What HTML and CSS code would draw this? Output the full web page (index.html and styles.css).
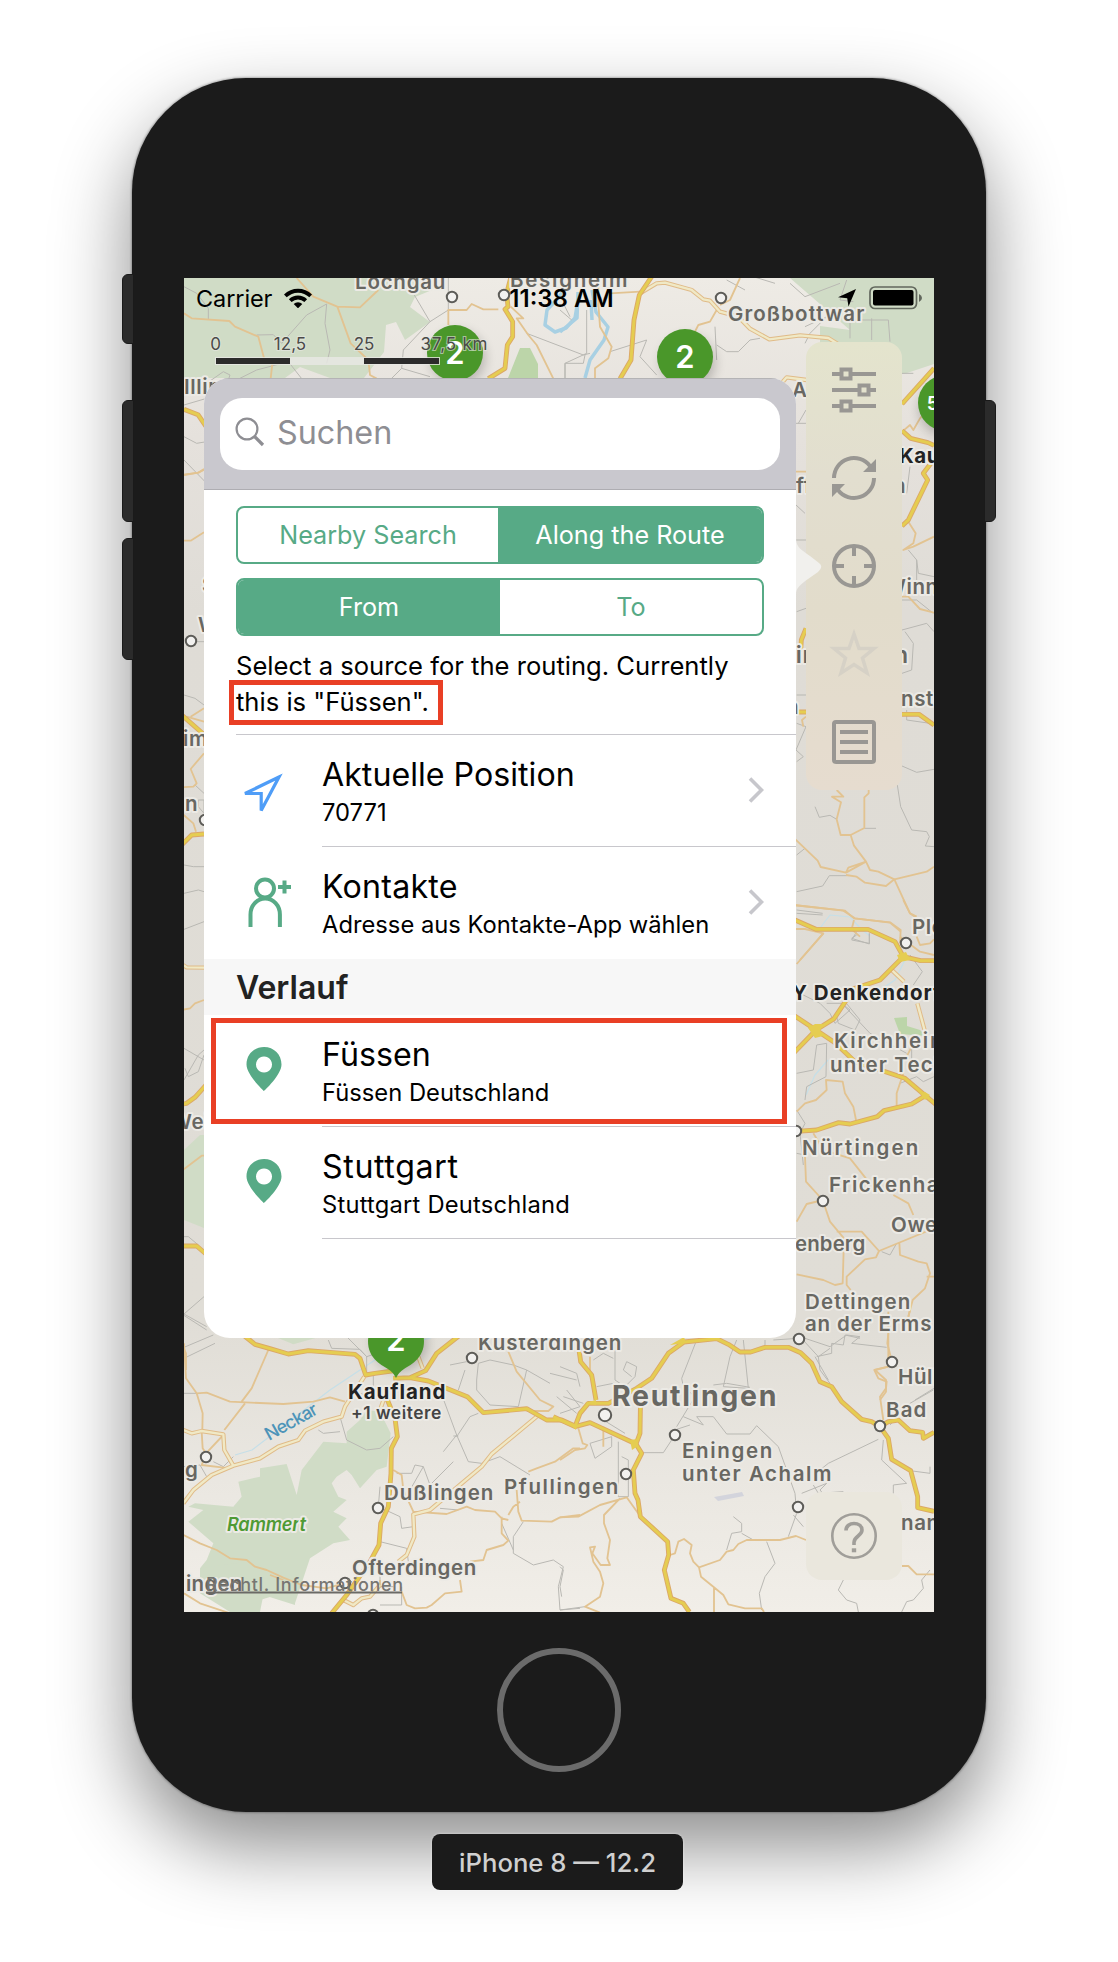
FILE: index.html
```html
<!DOCTYPE html>
<html lang="de">
<head>
<meta charset="utf-8">
<title>iPhone 8 — 12.2</title>
<link rel="stylesheet" href="styles.css">
</head>
<body>
<main class="stage">
  <div class="phone">
    <i class="key key-mute"></i><i class="key key-up"></i><i class="key key-down"></i><i class="key key-power"></i>
    <div class="screen">
      <svg class="map" viewBox="184 278 750 1334" width="750" height="1334">
        <defs>
          <linearGradient id="land" x1="0" y1="0" x2="0" y2="1">
            <stop offset="0" stop-color="#eeebe5"/><stop offset=".12" stop-color="#e5e1dc"/><stop offset=".25" stop-color="#dfdcd6"/>
            <stop offset=".78" stop-color="#e0ddd6"/><stop offset=".9" stop-color="#eae7e1"/><stop offset="1" stop-color="#f1eee8"/>
          </linearGradient>
          <filter id="soft" x="-50%" y="-50%" width="200%" height="200%"><feGaussianBlur stdDeviation="6"/></filter>
          <g id="motorways">
            <g transform="translate(100 60) scale(.33333)">
              <path d="M1232 654L1220 700 1224 740 1215 748 1238 785V830L1222 855 1215 925 1165 956"/>
              <path d="M252 1048L294 1064 320 1102"/>
            </g>
            <g transform="translate(560 260) scale(.33333)">
              <path d="M275 50L238 105 222 180 213 300 180 356"/>
              <path d="M1122 325L1026 432M1026 512L1052 535 1104 548 1122 556M1122 598L1090 640 1103 660 1045 780 1026 798"/>
            </g>
            <g transform="translate(780 560) scale(.33333)">
              <path d="M78 205L64 240 62 275M40 456H78M366 463H417L462 495"/>
            </g>
            <g transform="translate(780 900) scale(.33333)">
              <path d="M40 58L108 88H264L345 125 370 170 422 182H462"/>
              <path d="M370 170L300 240 215 268 196 305 162 356 108 390 40 460M40 345L108 390 165 428 225 485 375 535 436 587 470 615"/>
              <path d="M436 587L395 612 312 632 292 650 210 672 176 668 110 690 50 694"/>
            </g>
            <g transform="translate(170 370) scale(.33333)">
              <path d="M35 1035L100 1092M35 1425L65 1395 102 1392"/>
            </g>
            <g transform="translate(170 870) scale(.33333)">
              <path d="M35 703L50 700 75 682 108 645M35 1128H80L108 1152"/>
            </g>
            <g transform="translate(180 1310) scale(.33333)">
              <path d="M190 75L225 103 270 116 325 132 385 122 525 133 540 145 557 195 585 190 645 182"/>
              <path d="M840 75L770 130 737 182 690 203 640 205M690 203L745 213 862 260 910 308 1040 296 1100 330 1145 330 1190 350"/>
              <path d="M610 240L645 325 652 380 634 415 633 490 625 590 602 640 597 705 570 755 500 855 455 910"/>
            </g>
            <g transform="translate(560 1310) scale(.33333)">
              <path d="M-20 320L45 350 90 338 228 402 240 370 242 240"/>
              <path d="M45 350L60 310 85 280 145 280 230 235 275 205 325 130 372 96 470 86 505 103 540 126H572L615 112H685L722 128 755 160 780 215 815 230 845 275 905 328 935 335 960 350 985 385 995 448 1052 482 1073 560V593L1122 604"/>
              <path d="M960 350L985 335 1015 330 1050 362 1088 367 1090 385 1122 367M52 85L62 155 95 195 108 270"/>
              <path d="M228 402L245 430 220 480 225 550 234 570 241 620 323 695 326 735 313 780 333 865 370 880 388 906"/>
            </g>
          </g>
          <g id="highways">
            <g transform="translate(560 260) scale(.33333)">
              <path d="M240 100L290 70 315 68 395 90 430 118 450 122 480 155 535 170 570 206 628 238 720 226 805 234 850 262M660 375L680 352 740 360"/>
            </g>
            <g transform="translate(780 900) scale(.33333)"><path d="M330 205L372 245M412 310L435 395"/></g>
            <g transform="translate(170 870) scale(.33333)"><path d="M35 283L50 292 105 293"/></g>
            <g transform="translate(180 1310) scale(.33333)">
              <path d="M553 200L495 290 485 320 430 335 375 362 355 390 295 410 240 445 160 467 95 495 40 540 10 580M10 360L35 370 65 363 130 373 133 420 160 467M715 140L728 175M600 300L625 230"/>
              <path d="M1070 320L935 432 905 470 750 600 700 613 703 680 680 735 655 755M490 870L520 885 545 865 570 860 600 825"/>
            </g>
          </g>
        </defs>
        <rect x="184" y="278" width="750" height="1334" fill="url(#land)"/>

        <g class="wood">
          <path d="M184 278H425L432 290 415 297 410 307 430 322 405 340 396 322 386 325 384 352 364 378H330L300 367 285 378H184Z"/>
          <path d="M790 278H934V364L904 374H820V326L850 330Z"/>
          <path d="M184 1150L200 1135H204V1228L184 1220Z"/>
          <g transform="translate(180 1310) scale(.33333)">
            <path d="M285 80H420L340 103ZM540 330L560 300 600 305 632 370 620 470 590 480 540 535 515 495 500 480 470 500 455 520 475 560 500 570 460 605 500 625 475 650 510 690 460 700 390 745 345 880 290 855 240 870 190 880 60 775 80 750 100 700 25 635 70 600 25 590 45 580 160 590 185 560 175 515 240 500 240 475 320 462 350 555 365 480 430 395 500 400 500 365Z"/>
            <path d="M60 775L200 755 345 800 345 885 250 855 240 906H150L60 850Z"/>
          </g>
        </g>
        <g class="park">
          <path d="M508 378L520 348H530L538 364V378Z"/>
          <path d="M894 1018L907 1017V1026L920 1030 926 1036 900 1034Z"/>
        </g>
        <path d="M714 1497L742 1492 744 1496 718 1501Z" fill="#d3d4dc"/>

        <g class="water">
          <path d="M570 282L558 298 547 310 545 325 555 332 566 328 575 318 578 300M592 290L596 312 608 327 604 340 590 360 585 378"/>
          <path d="M560 332L577 318 578 292M591 300L592 320" />
        </g>
        <g class="stream">
          <path d="M820 928L830 915 850 917 862 930 870 936M235 1455L252 1450 330 1390 390 1350 440 1335M905 960L895 980 880 990M828 1060L815 1075 806 1095"/>
        </g>

        <g class="lane">
          <g transform="translate(100 60) scale(.33333)">
            <path d="M252 680L290 700 325 745V778M470 825L520 824 545 850 620 765 680 732 675 790 690 870 680 910M320 970L370 935 390 945 380 975 470 930 565 905 620 975M940 700L990 785 910 870 905 925 870 960M990 785L1045 750V650M905 925L990 950M1280 820L1450 885 1470 880M1460 750V880L1395 910V956M252 1035L320 1015M252 1130L290 1150 320 1145M252 1200L320 1270M1410 770L1390 730"/>
          </g>
          <g transform="translate(560 260) scale(.33333)">
            <path d="M15 356V310H70L75 285M35 180L0 150M150 275L260 240 240 290 290 345M465 200L470 300M470 255L500 275H535L570 240 600 235M500 60L555 90M580 50L645 70M690 70L735 110 840 70M860 60L840 120 880 125M735 200L800 170 750 220 735 250M870 180V235M935 175V240M870 180H985L990 245M1026 340H1060M708 490H738M708 735L735 760M708 840H738M1050 620L1040 700M1045 870L1070 900V960M715 490L738 450"/>
          </g>
          <g transform="translate(780 560) scale(.33333)">
            <path d="M50 155L78 145M366 210L440 190 462 215M375 215L400 250 395 330 366 340M410 0L415 40 462 50M366 120H410L460 160M50 490L78 500 48 570 70 590 50 605M50 405H78M366 618L410 637 462 628M352 675L362 740 395 810 440 815 448 830 436 858 462 860M105 740L118 772 150 766 170 778M253 805H288M50 885L75 865M50 995L128 978 148 947H200M50 1050L128 1060M230 1125L215 1135 268 1152V1120M380 450V480L450 490"/>
          </g>
          <g transform="translate(780 900) scale(.33333)">
            <path d="M50 40L128 45M230 95L215 120 268 130V100M390 165L427 215 400 255M60 280L120 310 150 340 165 370 210 330 185 310 140 310M195 305L240 360 225 390 175 370 170 350M195 320L270 400 380 460M50 520L100 510 110 435 140 430 138 530 80 560 75 600M395 440V500M360 550L410 530 430 545 462 530M50 630L75 670 60 700 70 795M50 760L75 765M305 1055L330 1065 350 1030M60 1310L150 1340 200 1305 240 1310 215 1330 320 1342M115 1370L150 1345M60 1310L115 1370 120 1410 150 1450M405 1500L462 1465"/>
          </g>
          <g transform="translate(170 370) scale(.33333)"><path d="M80 815H102M42 975L75 985 102 1005M75 1245L102 1270M85 1290H102V1330L85 1310ZM42 1485L70 1490H102"/></g>
          <g transform="translate(170 870) scale(.33333)"><path d="M42 70L85 60 102 65M42 178L102 155M42 535L102 570M42 630L85 555 102 540M45 595L55 620 85 605 102 555M42 1100H55L85 1125M42 1332L102 1280M42 1332L110 1370M42 1432L130 1395"/></g>
          <g transform="translate(180 1310) scale(.33333)">
            <path d="M10 15L80 60M12 145L105 100M12 250H50M445 90L455 115 540 118 560 140V190M500 80L560 140 590 130M580 190V240M480 320L500 390 560 420 600 415 640 380M540 250L575 260M780 240L830 375 865 455 905 460M790 425L830 375M820 378H835M830 380L870 320 895 310M810 165L860 155 870 150M835 240L855 180M890 210L895 160 930 150 1000 165 1040 180 1015 290 930 285 890 240ZM1040 180L1110 220M1110 190L1190 210M1130 260L1190 310M415 360L430 370 480 365M650 490L695 490 705 465 730 470 750 525 820 455M730 470L690 540M600 530L595 590 660 620 665 655 700 650M600 695L680 715 685 755M600 760V830H640M600 885H665V830M905 460L960 440 1050 495M780 595L835 600M1030 635L1000 680V730L1060 765 1120 750 1150 770 1135 830 1140 900 1200 895M965 640L1000 720M10 470L60 465 80 500M100 455L130 470 160 440"/>
          </g>
          <g transform="translate(560 1310) scale(.33333)">
            <path d="M165 85V210L195 230 225 200 230 170 200 155 190 180 215 200M100 150L130 130 160 145M0 170L50 190 60 230M10 260L70 280M20 240L60 290 0 310M410 90L365 205 370 230 405 260 350 350M530 90L510 140 490 230 565 235 550 90M460 225L500 220 570 232M370 320L430 345 410 320H460L500 372H570L590 347 655 410 705 550 710 610 685 680M725 550L800 520 780 540 830 600M350 358L390 345M345 375L310 428H245M90 400L105 445 155 410V380L90 400M130 330L195 370M175 395V560H205V450L185 440M805 460L955 388M780 480L805 460M970 390L965 450 1040 520 1000 525V550M1050 482L1110 490V470M700 615L730 650M760 525L775 550 850 545M615 90V110M640 90L715 85M765 140L805 210M770 140L815 130V100L850 105 855 75 900 85M990 345L1050 280 1120 240M520 620L545 640V665L515 670 500 720M545 670L580 690M620 695L645 760 615 800 598 850 605 900M850 810L835 840 860 870 890 880 895 906M1110 780L1085 810 1090 835 1060 870 1040 875 1025 906M0 770L10 780 0 830 5 860M0 900L75 890M160 220L110 230"/>
          </g>
        </g>

        <g class="road">
          <g transform="translate(100 60) scale(.33333)">
            <path d="M590 654L640 710 712 740 780 742 835 690M712 740L752 850 805 900 810 945 830 956M252 760L275 775 388 783 405 800 475 830 495 905 517 910 512 956M1045 795V750H1100L1115 732 1150 748H1195M1232 740L1270 775 1250 775 1285 825 1310 855 1360 956M1495 654V740M252 1245L295 1238 320 1225"/>
          </g>
          <g transform="translate(560 260) scale(.33333)">
            <path d="M540 54L510 120 480 135M470 150L450 185 415 195 405 215M115 130L120 200 155 260 145 295 105 325V356M150 100L240 95M708 635H738M1122 430L1080 475 1060 510 1050 495 1030 512M1045 785L1067 820 1060 850 1030 870 1060 860 1122 830"/>
          </g>
          <g transform="translate(780 560) scale(.33333)">
            <path d="M366 110H385L420 147 462 158M40 832L113 902 122 921 198 938 258 905 222 857 212 825 253 804V712L266 700V690M212 825L182 825 170 778 183 727 156 710 190 710 170 690M198 938L205 923 258 905 270 930 295 935 343 958 440 935 462 920M198 945L230 950 255 968 318 978 343 958 390 1060 405 1070M40 1035L195 1052 222 1075 330 1087 362 1110 360 1150M40 1107H75L130 1120 60 1200M78 470L66 480 70 500"/>
          </g>
          <g transform="translate(780 900) scale(.33333)">
            <path d="M370 0L390 40 410 50M40 15L190 32 225 55 330 68 362 95M50 192L130 100M222 60L215 88 240 110M360 110L420 155 462 165M410 110L420 135 450 130 462 118M50 635L75 610 108 600 140 570 138 540 188 545 195 580 220 620 228 660M370 520L350 580V620M395 440L380 470M100 700L130 750 210 775 260 838M75 770L78 845 128 900 150 965 192 1015 188 1150 165 1155 130 1140 50 1123M50 965L80 912 130 900M170 995H245L297 1053 462 985M297 1053L288 1072 255 1078 200 1130V1155L212 1170M340 885L385 910 400 945M358 1028L360 1065 415 1085 440 1090 450 1120 435 1165 398 1200 385 1250M440 1130H462M325 1235V1400M325 1400L285 1410 318 1440V1475L300 1500"/>
          </g>
          <g transform="translate(170 370) scale(.33333)"><path d="M35 315L85 308 102 297M35 512H62L102 487M62 1040L102 1015M50 1040L102 1055M102 1150L62 1197 80 1240 70 1250 35 1252M35 1330L70 1360 78 1385"/></g>
          <g transform="translate(170 870) scale(.33333)"><path d="M35 420L60 415 75 400 102 390M35 903L95 857H102M35 1420L48 1450V1500"/></g>
          <g transform="translate(180 1310) scale(.33333)">
            <path d="M12 100L18 205 50 250 68 310 67 360M50 250L80 248 150 275 310 282 400 275 450 262 495 275M185 275L215 235 265 120M195 280L133 360M65 365L68 415 78 430 130 375M10 675L60 700 110 720 150 745 200 750 225 770 260 780 310 803 365 825 440 835 490 820M310 810L270 795M75 440L65 465 150 475M985 125L1010 185 1080 270 1120 290 1105 303H1040M640 480L665 495 670 540 700 605 800 612 860 590 885 600 945 605 965 625 985 630M965 620V670L985 692 970 705 920 720 910 750 870 755M1045 485L1070 475 1125 455 1180 415H1200M1020 575L1000 590 985 615M1010 540L1015 605 1025 632 1115 635 1140 622 1200 615M840 810L845 845 795 850 755 885 740 893 705 895 680 885 665 845M12 850L60 880 150 910M600 810V830"/>
          </g>
          <g transform="translate(560 1310) scale(.33333)">
            <path d="M90 140V200M55 355L68 400 82 405 75 415 45 420 0 450M0 622L55 620 120 585 200 562 245 625M180 565L132 615V640L150 690 142 745 150 765 122 765 97 730 105 710 90 712 100 755 120 785 130 820 120 860 75 890 120 908M330 735L345 730 355 695 372 687 395 705 390 730 400 755 417 772 480 750 500 725 520 720 535 702 560 690H660L708 678 738 690M417 772L423 800 460 830 490 855 505 883 555 895H605L612 906M462 832V906M1026 768L1045 768 1070 793H1122M985 70L982 100 992 140M985 170L943 180 955 205 980 215 978 235 960 260 970 330M1050 0L1045 20M130 350V410"/>
          </g>
        </g>

        <use href="#highways" class="hw-edge"/><use href="#highways" class="hw-fill"/>
        <use href="#motorways" class="mw-edge"/><use href="#motorways" class="mw-fill"/>
        <path class="junction" d="M808 1028L815 1024 823 1024 820 1031 823 1036 815 1038ZM897 955L906 952 910 960 900 962ZM920 1093L925 1092 930 1095 925 1100ZM670 1345L684 1337 686 1343ZM630 1440L637 1439 638 1446 632 1450ZM571 1425L577 1425 576 1430ZM585 1403L596 1400 596 1405Z"/>

        <g class="town">
          <circle cx="452" cy="297" r="5.2"/><circle cx="504" cy="295" r="5.2"/><circle cx="721" cy="298" r="5.2"/>
          <circle cx="191" cy="641" r="5.2"/><circle cx="205" cy="820" r="5.2"/><circle cx="906" cy="943" r="5.2"/>
          <circle cx="796" cy="1131" r="5.2"/><circle cx="823" cy="1201" r="5.2"/><circle cx="799" cy="1339" r="5.2"/>
          <circle cx="892" cy="1362" r="5.2"/><circle cx="880" cy="1426" r="5.2"/><circle cx="605" cy="1415" r="6.2"/>
          <circle cx="675" cy="1435" r="5.2"/><circle cx="626" cy="1474" r="5.2"/><circle cx="798" cy="1507" r="5.2"/>
          <circle cx="472" cy="1358" r="5.2"/><circle cx="206" cy="1457" r="5.2"/><circle cx="378" cy="1508" r="5.2"/>
          <circle cx="345" cy="1583" r="5.2"/><circle cx="373" cy="1615" r="5.2"/>
        </g>

        <g class="place">
          <text x="355" y="289" textLength="91">Löchgau</text>
          <text x="510" y="287" textLength="118">Besigheim</text>
          <text x="728" y="321" textLength="137">Großbottwar</text>
          <text x="184" y="394">Illing</text>
          <text x="792" y="397">A</text>
          <text x="796" y="493">ff</text>
          <text x="893" y="493">n</text>
          <text x="885" y="594">Winnen</text>
          <text x="202" y="592">S</text><text x="198" y="632">W</text>
          <text x="183" y="746">im</text><text x="185" y="811">n</text>
          <text x="782" y="663" class="mid">ain</text><text x="894" y="663" class="mid">n</text>
          <text x="786" y="714">n</text><text x="901" y="706">nstet</text>
          <text x="912" y="934">Plo</text>
          <text x="834" y="1048" textLength="115">Kirchheim</text>
          <text x="830" y="1072" textLength="116">unter Teck</text>
          <text x="802" y="1155" textLength="117">Nürtingen</text>
          <text x="829" y="1192" textLength="137">Frickenhaus</text>
          <text x="891" y="1232" textLength="60">Owen</text>
          <text x="795" y="1251" textLength="71">enberg</text>
          <text x="805" y="1309" textLength="106">Dettingen</text>
          <text x="805" y="1331" textLength="127">an der Erms</text>
          <text x="898" y="1384">Hülb</text>
          <text x="886" y="1417" textLength="41">Bad</text>
          <text x="171" y="1129">Wei</text>
          <text x="478" y="1350" textLength="144">Kusterdingen</text>
          <text x="682" y="1458" textLength="91">Eningen</text>
          <text x="682" y="1481" textLength="150">unter Achalm</text>
          <text x="384" y="1500" textLength="110">Dußlingen</text>
          <text x="504" y="1494" textLength="115">Pfullingen</text>
          <text x="352" y="1575" textLength="125">Ofterdingen</text>
          <text x="185" y="1477">g</text>
          <text x="186" y="1591" textLength="57">ingen</text>
          <text x="901" y="1530">nan</text>
          <text x="612" y="1406" textLength="165" class="city">Reutlingen</text>
          <text x="792" y="1000" textLength="150" class="dark">Y Denkendorf</text>
          <text x="899" y="463" class="dark">Kaufl</text>
          <text x="348" y="1399" textLength="98" class="dark">Kaufland</text>
          <text x="351" y="1419" textLength="91" class="more">+1 weitere</text>
          <text x="227" y="1531" textLength="79" class="forest">Rammert</text>
          <text x="269" y="1441" textLength="58" class="river" transform="rotate(-29 269 1441)">Neckar</text>
        </g>

        <g fill="#000" opacity=".22" filter="url(#soft)">
          <circle cx="458" cy="358" r="27"/><circle cx="688" cy="363" r="27"/><circle cx="946" cy="409" r="27"/><circle cx="400" cy="1344" r="27"/>
        </g>
        <g fill="#4a972a">
          <circle cx="455" cy="353" r="28"/><circle cx="685" cy="357" r="28"/><circle cx="946" cy="403" r="28"/>
          <path d="M368 1341a28 28 0 0 1 56 0c0 17-12 23-20 28q-5 3-8 9q-3-6-8-9c-8-5-20-11-20-28Z"/>
        </g>
        <g class="count">
          <text x="455" y="364">2</text><text x="685" y="368">2</text><text x="396" y="1351">2</text>
          <text x="939" y="410" class="count-small">50</text>
        </g>

        <g class="scale">
          <rect x="215" y="357" width="225" height="8" fill="#e9e9e5" opacity=".8"/>
          <rect x="216" y="358" width="74" height="6" fill="#2c2c2b"/><rect x="364" y="358" width="75" height="6" fill="#2c2b2b"/>
          <text x="215.500" y="350">0</text><text x="290" y="350">12,5</text><text x="364" y="350">25</text><text x="454" y="350" textLength="67">37,5 km</text>
        </g>
        <text x="206" y="1591" textLength="197" class="legal">Rechtl. Informationen</text>
        <path d="M206 1592.500H402" stroke="#6b6a66" stroke-width="2"/>
      </svg>

      <header class="status">
        <span class="carrier">Carrier</span>
        <svg class="wifi" width="28" height="20" viewBox="0 0 28 20"><path d="M0 6.400a20 20 0 0 1 28 0L25.300 9.300a16 16 0 0 0-22.600 0ZM4.900 11.300a13 13 0 0 1 18.200 0L20.400 14a9.200 9.200 0 0 0-12.800 0ZM9.700 16.100a6.200 6.200 0 0 1 8.600 0L14 20.300Z"/></svg>
        <span class="clock">11:38 AM</span>
        <svg class="loc" width="18" height="18" viewBox="0 0 18 18"><path d="M18 0L10.500 17.500 9.200 9.300 0 8.300Z"/></svg>
        <svg class="battery" width="54" height="24" viewBox="0 0 54 24"><rect x="1" y="1" width="46.500" height="21.500" rx="5" fill="none" stroke="#0008" stroke-width="1.700"/><rect x="4" y="4" width="40.500" height="15.500" rx="2"/><path d="M50 8q3 1.500 3 4t-3 4Z" fill="#0008"/></svg>
      </header>

      <nav class="tools">
        <svg viewBox="0 0 44 44"><path d="M0 6H8M20 6H44M0 22H26M38 22H44M0 38H8M20 38H44M9.500 1.500h9v9h-9ZM27.500 17.500h9v9h-9ZM9.500 33.500h9v9h-9Z"/></svg>
        <svg viewBox="0 0 44 44"><path d="M2 22a20 20 0 0 1 36-12M42 22a20 20 0 0 1-36 12"/><path class="solid" d="M44 3V16H31ZM0 41V28H13Z"/></svg>
        <svg viewBox="0 0 44 44"><circle cx="22" cy="22" r="20"/><path d="M22 2V12M22 32V42M2 22H12M32 22H42"/></svg>
        <svg viewBox="0 0 44 44" class="off"><path d="M22 2L27 16.500H42L30.500 26 35 41 22 32.500 9 41 13.500 26 2 16.500H17Z"/></svg>
        <svg viewBox="0 0 44 44"><rect x="2" y="2" width="40" height="40" rx="2"/><path d="M8 12H36M8 22H36M8 32H36"/></svg>
      </nav>
      <button class="help"><svg viewBox="0 0 46 46" width="46" height="46"><circle cx="23" cy="23" r="21.700"/><path d="M15 17.500c0-9.500 16-9 16-.5 0 6-8 6-8 12.500V32"/><path d="M20.800 35.300h4.400v4h-4.400Z" class="dot"/></svg></button>

      <svg class="beak" width="26" height="56" viewBox="0 0 26 56"><path d="M0 0C0 10 6 12 14 18L23 25Q28 29 22 34L12 41C4 47 0 50 0 56Z"/></svg>
      <section class="popover">
        <div class="search">
          <label class="field">
            <svg width="30" height="30" viewBox="0 0 30 30"><circle cx="12" cy="12" r="10.400"/><path d="M19.500 19.500L28 28"/></svg>
            <span>Suchen</span>
          </label>
        </div>
        <div class="controls">
          <div class="segments first"><span>Nearby Search</span><span class="on">Along the Route</span></div>
          <div class="segments second"><span class="on">From</span><span>To</span></div>
          <p class="hint">Select a source for the routing. Currently<br>this is "Füssen".<i class="mark"></i></p>
        </div>
        <div class="row lead">
          <svg class="icon" width="50" height="50" viewBox="0 0 50 50"><path d="M40 12L6 28.500H22.200V45.500Z" fill="none" stroke="#4f9df7" stroke-width="3.200"/></svg>
          <div class="text"><b>Aktuelle Position</b><small>70771</small></div>
          <svg class="chevron" width="16" height="26" viewBox="0 0 16 26"><path d="M2 1.500L13.500 13 2 24.500"/></svg>
        </div>
        <div class="row">
          <svg class="icon" width="50" height="50" viewBox="0 0 50 50" fill="none" stroke="#57aa86" stroke-width="4"><circle cx="26" cy="11.500" r="9"/><path d="M11.500 50V37.500a14.700 16 0 0 1 29.400 0V50M39 10H52M45.500 3.500V16.500"/></svg>
          <div class="text"><b class="loose">Kontakte</b><small>Adresse aus Kontakte-App wählen</small></div>
          <svg class="chevron" width="16" height="26" viewBox="0 0 16 26"><path d="M2 1.500L13.500 13 2 24.500"/></svg>
        </div>
        <h2>Verlauf</h2>
        <div class="row">
          <svg class="icon" width="50" height="50" viewBox="0 0 50 50"><path fill="#57aa86" fill-rule="evenodd" d="M25 2C15 2 7.500 9.500 7.500 19.500 7.500 30 25 46 25 46S42.500 30 42.500 19.500C42.500 9.500 35 2 25 2ZM25 11.500a8 8 0 1 0 .01 0Z"/></svg>
          <div class="text"><b>Füssen</b><small>Füssen Deutschland</small></div>
          <i class="mark"></i>
        </div>
        <div class="row">
          <svg class="icon" width="50" height="50" viewBox="0 0 50 50"><path fill="#57aa86" fill-rule="evenodd" d="M25 2C15 2 7.500 9.500 7.500 19.500 7.500 30 25 46 25 46S42.500 30 42.500 19.500C42.500 9.500 35 2 25 2ZM25 11.500a8 8 0 1 0 .01 0Z"/></svg>
          <div class="text"><b class="loose wide">Stuttgart</b><small class="loose">Stuttgart Deutschland</small></div>
        </div>
      </section>
    </div>
    <div class="home"></div>
  </div>
  <div class="caption">iPhone 8 — 12.2</div>
</main>
</body>
</html>
```
FILE: styles.css
```css
* { box-sizing: border-box; }
body { margin: 0; background: #fff; font-family: Inter, "Liberation Sans", sans-serif; color: #000; }
.stage { height: 1962px; padding-top: 78px; display: flex; flex-direction: column; align-items: center; overflow: hidden; }

.phone {
  position: relative; width: 854px; height: 1734px; padding: 200px 52px 0; border-radius: 114px;
  background: #1b1b1b; display: flex; flex-direction: column; align-items: center;
  box-shadow: 0 0 2px 1px rgba(0,0,0,.25), 0 34px 78px rgba(0,0,0,.46);
}
.screen { position: relative; width: 750px; height: 1334px; overflow: hidden; flex: none; }
.home { width: 124px; height: 124px; margin-top: 36px; border: 6px solid #6b6b6b; border-radius: 50%; }
.caption { width: 251px; height: 56px; margin: 22px 3px 0 0; padding-top: 1px; border-radius: 8px; background: #1b1b1b; color: #d0d0d0; font-size: 25.700px; font-weight: 500; display: flex; align-items: center; justify-content: center; position: relative; box-shadow: 0 0 2px 1px rgba(255,255,255,.25); }

.key { position: absolute; width: 12px; background: #2b2b2b; border: 1px solid #1a1a1a; }
.key-mute, .key-up, .key-down { left: -10px; border-radius: 6px 0 0 6px; }
.key-mute { top: 196px; height: 70px; }
.key-up { top: 322px; height: 122px; }
.key-down { top: 460px; height: 122px; }
.key-power { right: -10px; top: 322px; height: 122px; border-radius: 0 6px 6px 0; }

.map { display: block; }
.wood { fill: #d0dcc6; }
.park { fill: #bcd5a9; }
.water, .stream, .lane, .road, .hw-edge, .hw-fill, .mw-edge, .mw-fill { fill: none; stroke-linejoin: round; }
.water { stroke: #a8d0e3; stroke-width: 3.5; }
.stream { stroke: #c5dfe8; stroke-width: 1.2; }
.lane { stroke: #b9b8b3; stroke-width: 3; }
.road { stroke: #e2c391; stroke-width: 5.5; }
.hw-edge { stroke: #e0bb88; stroke-width: 13; }
.hw-fill { stroke: #f0e9c6; stroke-width: 7; }
.mw-edge { stroke: #dca867; stroke-width: 14.5; }
.mw-fill { stroke: #e5cd51; stroke-width: 9; }
.junction { fill: #e5cd51; }
.town { fill: #f2f1ef; stroke: #5d5c58; stroke-width: 2; }
.place text { font-size: 20.500px; font-weight: 600; fill: #686762; stroke: #eceae5; stroke-width: 4px; stroke-linejoin: round; paint-order: stroke; letter-spacing: .6px; }
.place .mid { font-size: 23px; }
.place .city { font-size: 28.500px; font-weight: 700; }
.place .dark { font-weight: 700; fill: #232323; }
.place .more { font-size: 17.500px; font-weight: 600; fill: #444; }
.place .forest { font-size: 18.500px; font-weight: 600; font-style: italic; fill: #4f9a35; letter-spacing: 0; }
.place .river { font-size: 18px; font-weight: 500; fill: #4d93b8; stroke: none; }
.count { fill: #fff; font-size: 31px; font-weight: 600; text-anchor: middle; }
.count .count-small { font-size: 19px; }
.scale text { font-size: 17px; text-anchor: middle; fill: #4a4a48; stroke: #e9e9e5; stroke-width: 2px; stroke-opacity: .6; paint-order: stroke; }
.legal { font-size: 18px; font-weight: 500; fill: #777672; }

.status { position: absolute; inset: 0 0 auto; height: 40px; padding: 0 11px 0 12px; display: flex; align-items: center; font-size: 24px; }
.status svg { flex: none; }
.carrier { font-size: 23.500px; letter-spacing: -.1px; }
.wifi { margin-left: 12px; }
.clock { margin-left: 197px; font-weight: 600; }
.loc { margin-left: auto; margin-right: 13px; }

.tools {
  position: absolute; left: 622px; top: 64px; width: 96px; height: 448px; padding-top: 26px; border-radius: 16px;
  background: linear-gradient(#e4e4cd, #e2decf 30%, #e2dccb 60%, #e6dccf);
  display: flex; flex-direction: column; align-items: center; gap: 44px;
}
.tools svg { width: 44px; height: 44px; fill: none; stroke: #999793; stroke-width: 4; overflow: visible; }
.tools svg .solid { fill: #999793; stroke: none; }
.tools svg.off { stroke: #d6d1c6; stroke-width: 3.5; }
.help { position: absolute; left: 622px; top: 1214px; width: 96px; height: 88px; border: 0; padding: 0; border-radius: 16px; background: #eae7dd; display: grid; place-items: center; }
.help svg { fill: none; stroke: #a09e99; stroke-width: 2.6; }
.help svg path { stroke-width: 3.6; }
.help svg .dot { fill: #a09e99; stroke: none; }

.beak { position: absolute; left: 612px; top: 260px; fill: #f1f0ed; }
.popover { position: absolute; left: 20px; top: 100px; width: 592px; height: 960px; border-radius: 26px; background: #fff; overflow: hidden; }
.search { height: 112px; padding: 20px 16px; background: #c9c8ce; border-top: 1px solid #b4b3b5; border-bottom: 1px solid #aeadb2; display: grid; }
.field { height: 72px; margin-top: -1px; border-radius: 22px; background: #fff; display: flex; align-items: center; gap: 12px; padding: 0 16px 4px 15px; color: #8e8e93; font-size: 32.300px; }
.field svg { fill: none; stroke: #8e8e93; stroke-width: 2.2; }
.field svg path { stroke-width: 3.2; }
.controls { padding: 16px 32px 0; height: 245px; }
.segments { height: 58px; border: 2px solid #57aa86; border-radius: 8px; display: grid; overflow: hidden; color: #57aa86; font-size: 25.200px; }
.segments > span { display: grid; place-items: center; padding-bottom: 1px; }
.segments .on { background: #57aa86; color: #fff; }
.first { grid-template-columns: 260px 1fr; }
.second { grid-template-columns: 262px 1fr; margin-top: 14px; }
.hint { position: relative; margin: 12px 0 0; font-size: 25.600px; line-height: 36px; white-space: nowrap; }
.hint .mark { position: absolute; left: -7px; top: 32px; width: 214px; height: 45px; border: 5px solid #e93f25; }
.row { position: relative; height: 112px; padding-left: 35px; display: flex; }
.row::after { content: ""; position: absolute; left: 118px; right: 0; bottom: 0; height: 1px; background: #c8c7cc; }
.lead::before { content: ""; position: absolute; left: 32px; right: 0; top: -1px; height: 1px; background: #c8c7cc; }
.icon { flex: none; margin-top: 30px; overflow: visible; }
.text { margin-left: 33px; padding-top: 19px; display: flex; flex-direction: column; white-space: nowrap; }
.text b { font-weight: 400; font-size: 32.200px; line-height: 42px; }
.text small { font-size: 23.750px; line-height: 34px; }
.text .loose { letter-spacing: .2px; }
.text .wide { letter-spacing: .6px; }
.chevron { position: absolute; right: 32px; top: 42px; fill: none; stroke: #c7c7cc; stroke-width: 3.6; }
.row:has(+ h2)::after { display: none; }
h2 { margin: 0; height: 56px; padding-left: 32px; background: #f7f7f7; color: #222; font-size: 32px; font-weight: 600; line-height: 57px; }
.row .mark { position: absolute; left: 7px; top: 3px; width: 576px; height: 106px; border: 5px solid #e93f25; }
```
